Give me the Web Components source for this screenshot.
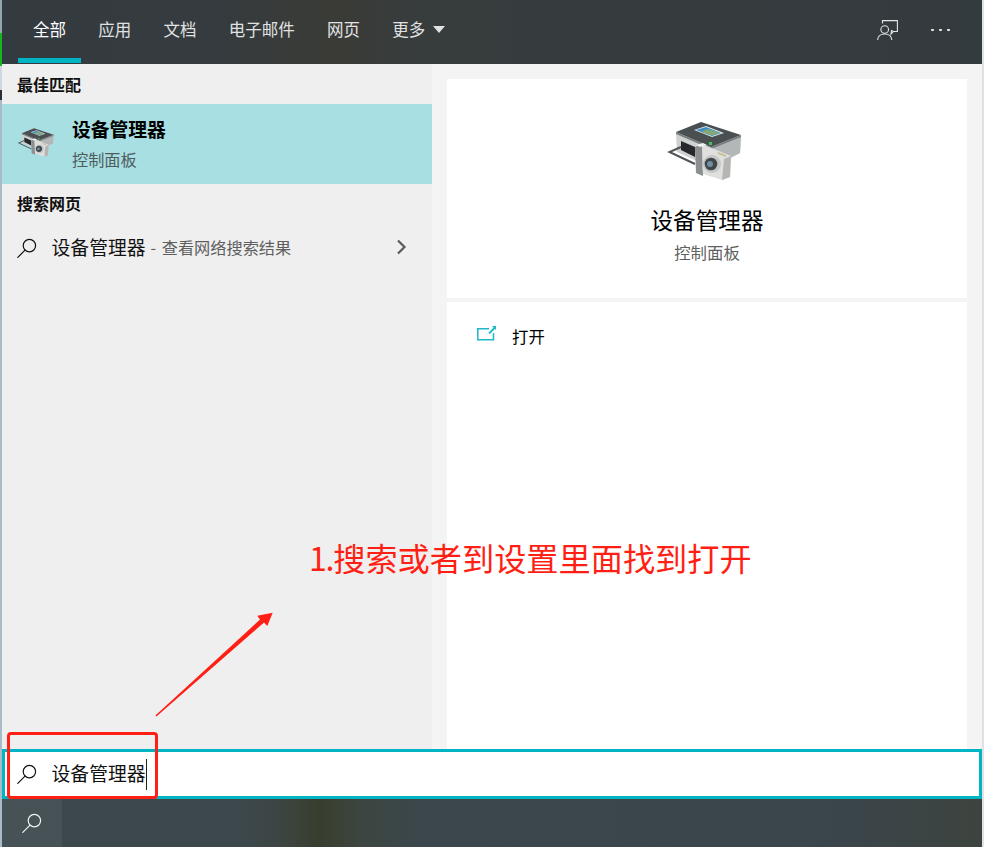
<!DOCTYPE html>
<html lang="zh">
<head>
<meta charset="utf-8">
<title>设备管理器</title>
<style>
  html, body { margin: 0; padding: 0; background: #f1f1f1; }
  body { font-family: "Noto Sans CJK SC", "Noto Sans", sans-serif; width: 984px; height: 847px; overflow: hidden; }
</style>
</head>
<body>
<search-window>
  <tab-bar slot="top">
    <tab-item active>全部</tab-item>
    <tab-item>应用</tab-item>
    <tab-item>文档</tab-item>
    <tab-item>电子邮件</tab-item>
    <tab-item>网页</tab-item>
    <tab-item caret>更多</tab-item>
  </tab-bar>

  <results-list slot="left">
    <section-label style="height:40px;padding-bottom:1px;box-sizing:border-box">最佳匹配</section-label>
    <best-match title-text="设备管理器" sub-text="控制面板"></best-match>
    <section-label style="height:38px;padding-bottom:2px">搜索网页</section-label>
    <web-row term="设备管理器" hint="- 查看网络搜索结果"></web-row>
  </results-list>

  <detail-pane slot="right" title-text="设备管理器" sub-text="控制面板" action="打开"></detail-pane>

  <search-box slot="input" value="设备管理器"></search-box>
  <task-bar slot="bottom"></task-bar>
</search-window>

<step-note></step-note>

<script>
// shared svg bits
const ICONS = {
  search: `<svg viewBox="0 0 20 20" width="20" height="20" fill="none" stroke="currentColor" stroke-width="1.2"><circle cx="12.4" cy="7.6" r="6.2"/><path d="M8 12.2 .8 19.4" stroke-linecap="round"/></svg>`,
  device: `<svg viewBox="0 0 90 80" width="100%" height="100%" style="filter:blur(.4px)">
    <path d="M14 23 39 12 79 26 78 43 50 58 15 42Z" fill="#cfd1d1"/>
    <path d="M50 38 79 26 78 43 68 48 50 42Z" fill="#b4b7b8"/>
    <path d="M14 22 39 12 79 25 49 37Z" fill="#4a4f52"/>
    <path d="M14 22 49 37 79 25 79 27 49 39 14 24Z" fill="#767b7d"/>
    <path d="M32 20 44 16 62 23 50 27Z" fill="#dfe7ea"/>
    <path d="M34 20 44 17 59 23 50 26Z" fill="#3f8fc4"/>
    <path d="M39 22 46 19 58 23 50 25.5Z" fill="#86a878"/>
    <path d="M19 31 33 37 33 47 19 40Z" fill="#26292b"/>
    <path d="M19 37 7.5 42 33 54" fill="none" stroke="#4f5456" stroke-width="2"/>
    <path d="M33 37 40 34 41 66 34 63Z" fill="#8b8f90"/>
    <path d="M40 34 69 46 68 67 60 70 41 64Z" fill="#dfe0de"/>
    <path d="M60 70 68 67 69 46 62 49Z" fill="#b4b6b4"/>
    <circle cx="50" cy="54" r="9" fill="#c4c6c6"/>
    <circle cx="49" cy="54" r="6.3" fill="#3f4549"/>
    <circle cx="48" cy="54" r="3" fill="#6f8ea3"/>
    <path d="M56 42 64 45 64 47 56 44Z" fill="#c8bd93"/>
    <path d="M47 32h3v3h-3z" fill="#43c45a"/>
    <path d="M34 35 41 33 45 35 38 37Z" fill="#f2f2f2"/>
  </svg>`
};

class SearchWindow extends HTMLElement {
  constructor() {
    super();
    this.attachShadow({ mode: 'open' });
    this.shadowRoot.innerHTML = `
      <style>
        :host { display: grid; width: 984px; height: 847px; grid-template-columns: 2px 430px 550px 2px; grid-template-rows: 64px 685px 50px 48px; }
        .edge-l { grid-column: 1; grid-row: 1 / 5; background: linear-gradient(#93a4ae 0 33px, #16b51f 33px 66px, #cfd8de 66px 90px, #2c2f33 90px 100px, #a9bbc7 100px 100%); }
        .edge-r { grid-column: 4; grid-row: 1 / 5; background: #dfe2e4; }
        .top { grid-column: 2 / 4; grid-row: 1; display: flex; min-width: 0; }
        .left { grid-column: 2; grid-row: 2; display: flex; min-height: 0; }
        .right { grid-column: 3; grid-row: 2; display: flex; min-height: 0; }
        .input { grid-column: 2 / 4; grid-row: 3; display: flex; }
        .bottom { grid-column: 2 / 4; grid-row: 4; display: flex; }
      </style>
      <div class="edge-l"></div>
      <div class="top"><slot name="top"></slot></div>
      <div class="left"><slot name="left"></slot></div>
      <div class="right"><slot name="right"></slot></div>
      <div class="input"><slot name="input"></slot></div>
      <div class="bottom"><slot name="bottom"></slot></div>
      <div class="edge-r"></div>`;
  }
}

class TabBar extends HTMLElement {
  constructor() {
    super();
    this.attachShadow({ mode: 'open' });
    this.shadowRoot.innerHTML = `
      <style>
        :host { display: flex; flex: 1; height: 64px; box-sizing: border-box; padding-left: 16px; color: #e0e2e3;
          background: linear-gradient(90deg, #343b40 0, #353b3e 220px, #3a3b36 330px, #373c3d 420px, #343b3f 100%); }
        .tabs { display: flex; flex: 1; gap: 2.25px; }
        .tools { display: flex; align-items: center; padding-right: 32px; gap: 33px; padding-bottom: 4px; }
        .dots { display: flex; gap: 5.4px; }
        .dots i { width: 2.6px; height: 2.6px; border-radius: 50%; background: #f0f1f1; }
      </style>
      <div class="tabs"><slot></slot></div>
      <div class="tools">
        <svg width="21" height="20" viewBox="0 0 21 20" fill="none" stroke="#e4e6e7" stroke-width="1.1">
          <path d="M5.5 3.5V.6H20.4V11.5H16.5L14 14.2 14.5 10.5 16.5 11.5"/>
          <circle cx="7.7" cy="9.5" r="3.8"/>
          <path d="M.6 20c.3-3.7 3-6 7.1-6s6.8 2.3 7.1 6"/>
        </svg>
        <div class="dots"><i></i><i></i><i></i></div>
      </div>`;
  }
}

class TabItem extends HTMLElement {
  constructor() {
    super();
    this.attachShadow({ mode: 'open' });
  }
  connectedCallback() {
    const active = this.hasAttribute('active');
    const caret = this.hasAttribute('caret');
    this.shadowRoot.innerHTML = `
      <style>
        :host { display: flex; align-items: center; gap: 8px; height: 63px; box-sizing: border-box; padding: 0 15px;
          font-size: 16.5px; color: ${active ? '#fff' : 'inherit'};
          border-bottom: 5px solid ${active ? '#00b4c4' : 'transparent'}; }
        .caret { width: 0; height: 0; border-left: 6.5px solid transparent; border-right: 6.5px solid transparent; border-top: 7px solid #dfe1e2; margin-top: 1px; }
      </style>
      <slot></slot>${caret ? '<span class="caret"></span>' : ''}`;
  }
}

class ResultsList extends HTMLElement {
  constructor() {
    super();
    this.attachShadow({ mode: 'open' });
    this.shadowRoot.innerHTML = `
      <style>:host { display: flex; flex-direction: column; flex: 1; background: #efefef; }</style>
      <slot></slot>`;
  }
}

class SectionLabel extends HTMLElement {
  constructor() {
    super();
    this.attachShadow({ mode: 'open' });
    this.shadowRoot.innerHTML = `
      <style>:host { display: flex; align-items: center; padding-left: 15px; font-size: 16px; font-weight: 700; color: #111; }</style>
      <slot></slot>`;
  }
}

class BestMatch extends HTMLElement {
  constructor() {
    super();
    this.attachShadow({ mode: 'open' });
  }
  connectedCallback() {
    this.shadowRoot.innerHTML = `
      <style>
        :host { display: flex; align-items: center; height: 80px; background: #a7dfe2; padding-left: 13px; gap: 14px; color: #000; }
        .ic { width: 44px; height: 40px; margin-bottom: 4px; flex: none; }
        .tx { display: flex; flex-direction: column; margin-left: -1px; }
        b { font-size: 18.8px; line-height: 28px; font-weight: 700; margin-top: -2px; }
        span { font-size: 16.2px; line-height: 24px; color: #4f5c5e; margin-top: 4px; }
      </style>
      <div class="ic">${ICONS.device}</div>
      <div class="tx"><b>${this.getAttribute('title-text')}</b><span>${this.getAttribute('sub-text')}</span></div>`;
  }
}

class WebRow extends HTMLElement {
  constructor() {
    super();
    this.attachShadow({ mode: 'open' });
  }
  connectedCallback() {
    this.shadowRoot.innerHTML = `
      <style>
        :host { display: flex; align-items: center; height: 48px; padding-left: 15px; color: #111; }
        svg { flex: none; }
        svg:first-child { margin-bottom: 1px; }
        .term { font-size: 18.8px; margin-left: 14.6px; padding-bottom: 4px; }
        .hint { font-size: 16.2px; word-spacing: 2px; color: #5e5e5e; margin-left: 5px; flex: 1; padding-bottom: 3px; }
        .chev { margin: 0 25px 2px 0; color: #5b5b5b; }
      </style>
      ${ICONS.search}
      <span class="term">${this.getAttribute('term')}</span>
      <span class="hint">${this.getAttribute('hint')}</span>
      <svg class="chev" width="11" height="16" viewBox="0 0 11 16" fill="none" stroke="currentColor" stroke-width="2.2"><path d="M2 1.5 8.5 8 2 14.5"/></svg>`;
  }
}

class DetailPane extends HTMLElement {
  constructor() {
    super();
    this.attachShadow({ mode: 'open' });
  }
  connectedCallback() {
    this.shadowRoot.innerHTML = `
      <style>
        :host { display: flex; flex-direction: column; flex: 1; background: #f4f4f4; padding: 15px 15px 0; color: #000; }
        .head { height: 219px; background: #fff; display: flex; flex-direction: column; align-items: center; box-sizing: border-box; padding-top: 31px; flex: none; }
        .ic { width: 90px; height: 80px; margin-left: -1px; }
        .t { font-size: 22.6px; line-height: 32px; margin-top: 14px; }
        .s { font-size: 16.4px; line-height: 24px; color: #5f5f5f; margin-top: 4px; }
        .body { flex: 1; margin-top: 4px; background: #fff; display: flex; align-items: flex-start; padding: 22px 0 0 30px; gap: 15px; }
        .open { font-size: 16.4px; line-height: 24px; }
        .body svg { margin-top: 1px; }
      </style>
      <div class="head">
        <div class="ic">${ICONS.device}</div>
        <div class="t">${this.getAttribute('title-text')}</div>
        <div class="s">${this.getAttribute('sub-text')}</div>
      </div>
      <div class="body">
        <svg width="20" height="16" viewBox="0 0 20 16" fill="none" stroke="#1cb8ca" stroke-width="1.5"><path d="M12 3.7H.8V14.7H16.5V8"/><path d="M12 8.5 18 2.5" stroke-width="1.8"/><path d="M15 1h4v4z" fill="#1cb8ca" stroke="none"/></svg>
        <span class="open">${this.getAttribute('action')}</span>
      </div>`;
  }
}

class SearchBox extends HTMLElement {
  constructor() {
    super();
    this.attachShadow({ mode: 'open' });
  }
  connectedCallback() {
    this.shadowRoot.innerHTML = `
      <style>
        :host { display: flex; flex: 1; align-items: center; box-sizing: border-box; height: 50px; border: 3px solid #00b4c4; background: #fff; padding-left: 12px; color: #111; }
        .val { font-size: 18.8px; margin-left: 14.6px; line-height: 30px; padding-bottom: 3px; }
        .cursor { width: 1.5px; height: 31px; background: #222; }
      </style>
      ${ICONS.search}
      <span class="val">${this.getAttribute('value')}</span><span class="cursor"></span>`;
  }
}

class TaskBar extends HTMLElement {
  constructor() {
    super();
    this.attachShadow({ mode: 'open' });
    this.shadowRoot.innerHTML = `
      <style>
        :host { display: flex; flex: 1; height: 48px; color: #f2f3f3;
          background: linear-gradient(90deg, #3d484d 0, #3d484c 245px, #3c443f 285px, #383e2e 315px, #3c4540 360px, #3b474d 420px, #3a454c 820px, #3d443f 984px); }
        .btn { width: 60px; display: flex; align-items: center; justify-content: center; background: #465256; }
      </style>
      <div class="btn">${ICONS.search}</div>`;
  }
}

// red annotation drawn over the screenshot
class StepNote extends HTMLElement {
  constructor() {
    super();
    this.attachShadow({ mode: 'open' });
    this.shadowRoot.innerHTML = `
      <style>
        :host { display: block; position: absolute; inset: 0; pointer-events: none; }
        .txt { position: absolute; left: 309px; top: 534px; font-size: 32.2px; line-height: 46px; color: #ff1f14; white-space: nowrap; }
        .txt span { letter-spacing: -1.3px; }
        .box { position: absolute; left: 7px; top: 732px; width: 151px; height: 67px; box-sizing: border-box; border: 3px solid #ff1f14; border-radius: 4px; }
        svg { position: absolute; left: 150px; top: 605px; }
      </style>
      <div class="txt"><span>1.</span>搜索或者到设置里面找到打开</div>
      <div class="box"></div>
      <svg width="130" height="115" viewBox="0 0 130 115"><path d="M5.4 110.4 110 14.5 107.3 10.7 122.7 7.7 117.3 21 114 17.5 6.4 111.5Z" fill="#ff1f14"/></svg>`;
  }
}

customElements.define('search-window', SearchWindow);
customElements.define('tab-bar', TabBar);
customElements.define('tab-item', TabItem);
customElements.define('results-list', ResultsList);
customElements.define('section-label', SectionLabel);
customElements.define('best-match', BestMatch);
customElements.define('web-row', WebRow);
customElements.define('detail-pane', DetailPane);
customElements.define('search-box', SearchBox);
customElements.define('task-bar', TaskBar);
customElements.define('step-note', StepNote);
</script>
</body>
</html>
